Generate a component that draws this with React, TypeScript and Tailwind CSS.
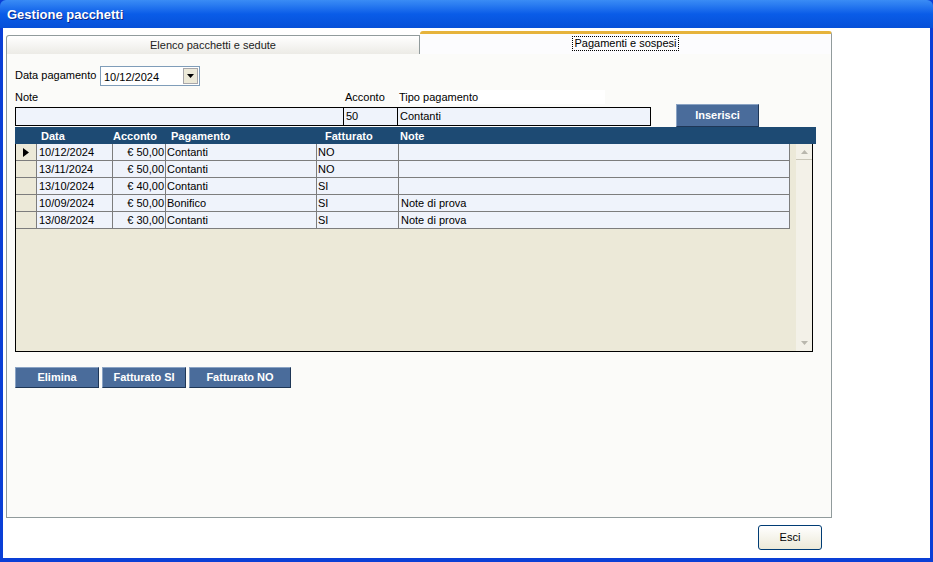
import { FC } from "react";

const rows = [
  { data: "10/12/2024", acconto: "€ 50,00", pagamento: "Contanti", fatturato: "NO", note: "" },
  { data: "13/11/2024", acconto: "€ 50,00", pagamento: "Contanti", fatturato: "NO", note: "" },
  { data: "13/10/2024", acconto: "€ 40,00", pagamento: "Contanti", fatturato: "SI", note: "" },
  { data: "10/09/2024", acconto: "€ 50,00", pagamento: "Bonifico", fatturato: "SI", note: "Note di prova" },
  { data: "13/08/2024", acconto: "€ 30,00", pagamento: "Contanti", fatturato: "SI", note: "Note di prova" },
];

const BlueButton: FC<{ label: string; className?: string }> = ({ label, className }) => (
  <button
    className={`flex h-[21px] items-center justify-center border border-t-[#8aa3c4] border-l-[#8aa3c4] border-r-[#1e3656] border-b-[#1e3656] bg-[#4a6c9b] text-[11px] font-bold text-white ${className ?? ""}`}
  >
    {label}
  </button>
);

const cell = "flex items-center overflow-hidden whitespace-nowrap border-r border-[#7d7d7d] bg-[#eff3fb] leading-[14px]";

const App: FC = () => {
  return (
    <div
      className="flex h-[562px] w-[933px] flex-col bg-[#0a3fd6] text-[11px] text-black"
      style={{ fontFamily: '"Liberation Sans", Arial, sans-serif' }}
    >
      {/* title bar */}
      <div className="flex h-[28px] shrink-0 items-center rounded-t-[6px] bg-gradient-to-b from-[#3a8cf5] via-[#0a5ce8] to-[#0650d8] px-[7px]">
        <span className="pt-[2px] text-[13px] font-bold text-white [text-shadow:1px_1px_0_#0a2a8a]">
          Gestione pacchetti
        </span>
      </div>

      {/* window body */}
      <div className="mx-[3px] mb-[4px] flex flex-1 flex-col bg-white pl-[3px] pt-[3px]">
        {/* tabs */}
        <div className="flex h-[23px] items-end">
          <div className="flex h-[19px] w-[414px] items-center justify-center rounded-tl-[3px] border border-b-0 border-[#919b9c] bg-gradient-to-b from-white to-[#ecebe6] text-[#222]">
            Elenco pacchetti e sedute
          </div>
          <div className="flex h-[23px] w-[412px] items-start justify-center rounded-t-[3px] border-t-[3px] border-r border-t-[#e6b33c] border-r-[#919b9c] bg-[#fcfcfe] pt-[2px]">
            <span className="border border-dotted border-black px-[1px] leading-[13px]">
              Pagamenti e sospesi
            </span>
          </div>
        </div>

        {/* panel */}
        <div className="flex h-[464px] w-[826px] flex-col border border-t-0 border-[#919b9c] bg-[#fbfbf9] px-[8px] pt-[12px]">
          <div className="flex h-[20px] items-start">
            <span className="w-[85px] pt-[1px]">Data pagamento</span>
            <div className="flex h-[20px] w-[100px] items-center border border-[#7f9db9] bg-white pl-[3px]">
              <span className="flex-1 pt-[2px]">10/12/2024</span>
              <div className="mr-[1px] flex h-[16px] w-[15px] items-center justify-center border border-[#a7a6aa] bg-[#ece9d8]">
                <svg width="7" height="4" viewBox="0 0 7 4">
                  <path d="M0 0h7L3.5 4z" fill="#000" />
                </svg>
              </div>
            </div>
          </div>

          <div className="mt-[4px] flex h-[14px] items-end leading-[14px]">
            <span className="w-[330px]">Note</span>
            <span className="w-[54px]">Acconto</span>
            <span className="w-[206px] bg-white">Tipo pagamento</span>
          </div>

          <div className="flex h-[23px] items-start">
            <div className="mt-[3px] h-[19px] w-[329px] border border-black bg-[#eff3fb]" />
            <div className="mt-[3px] flex h-[19px] w-[54px] items-center border border-l-0 border-black bg-[#eff3fb] pl-[2px]">
              50
            </div>
            <div className="mt-[3px] flex h-[19px] w-[253px] items-center border border-l-0 border-black bg-[#eff3fb] pl-[2px]">
              Contanti
            </div>
            <BlueButton label="Inserisci" className="ml-[25px] h-[23px] w-[83px]" />
          </div>

          {/* grid header */}
          <div className="grid h-[17px] w-[801px] grid-cols-[21px_76px_53px_151px_82px_418px] items-center bg-[#1d4a73] font-bold leading-[14px] text-white">
            <span />
            <span className="pl-[5px]">Data</span>
            <span className="pl-[1px]">Acconto</span>
            <span className="pl-[6px]">Pagamento</span>
            <span className="pl-[9px]">Fatturato</span>
            <span className="pl-[2px]">Note</span>
          </div>

          {/* grid body */}
          <div className="flex h-[208px] w-[798px] border border-t-0 border-black bg-[#ece9d8]">
            <div className="w-[774px]">
              {rows.map((r, i) => (
                <div
                  key={r.data}
                  className="grid h-[17px] grid-cols-[21px_76px_53px_151px_82px_391px] grid-rows-[16px] border-b border-[#7d7d7d]"
                >
                  <div className="flex items-center justify-center border-r border-[#7d7d7d] bg-[#ece9d8]">
                    {i === 0 && (
                      <svg width="6" height="9" viewBox="0 0 6 9">
                        <path d="M0 0l6 4.5L0 9z" fill="#000" />
                      </svg>
                    )}
                  </div>
                  <div className={`${cell} pl-[2px]`}>{r.data}</div>
                  <div className={`${cell} justify-end pr-[1px]`}>{r.acconto}</div>
                  <div className={`${cell} pl-[1px]`}>{r.pagamento}</div>
                  <div className={`${cell} pl-[1px]`}>{r.fatturato}</div>
                  <div className={`${cell} pl-[2px]`}>{r.note}</div>
                </div>
              ))}
            </div>
            <div className="ml-auto flex w-[16px] flex-col justify-between bg-[#f3f1e8]">
              <div className="flex h-[16px] items-center justify-center border-b border-[#c9c6b8]">
                <svg width="7" height="4" viewBox="0 0 7 4">
                  <path d="M0 4h7L3.5 0z" fill="#b9b7ad" />
                </svg>
              </div>
              <div className="flex h-[16px] items-center justify-center">
                <svg width="7" height="4" viewBox="0 0 7 4">
                  <path d="M0 0h7L3.5 4z" fill="#b9b7ad" />
                </svg>
              </div>
            </div>
          </div>

          <div className="mt-[15px] flex gap-[3px]">
            <BlueButton label="Elimina" className="w-[84px]" />
            <BlueButton label="Fatturato SI" className="w-[84px]" />
            <BlueButton label="Fatturato NO" className="w-[102px]" />
          </div>
        </div>

        <div className="flex w-[826px] justify-end pt-[7px]">
          <button className="mr-[10px] flex h-[25px] w-[64px] items-center justify-center rounded-[3px] border border-[#003c74] bg-gradient-to-b from-white to-[#ece9d8] text-[11px]">
            Esci
          </button>
        </div>
      </div>
    </div>
  );
};

export default App;
